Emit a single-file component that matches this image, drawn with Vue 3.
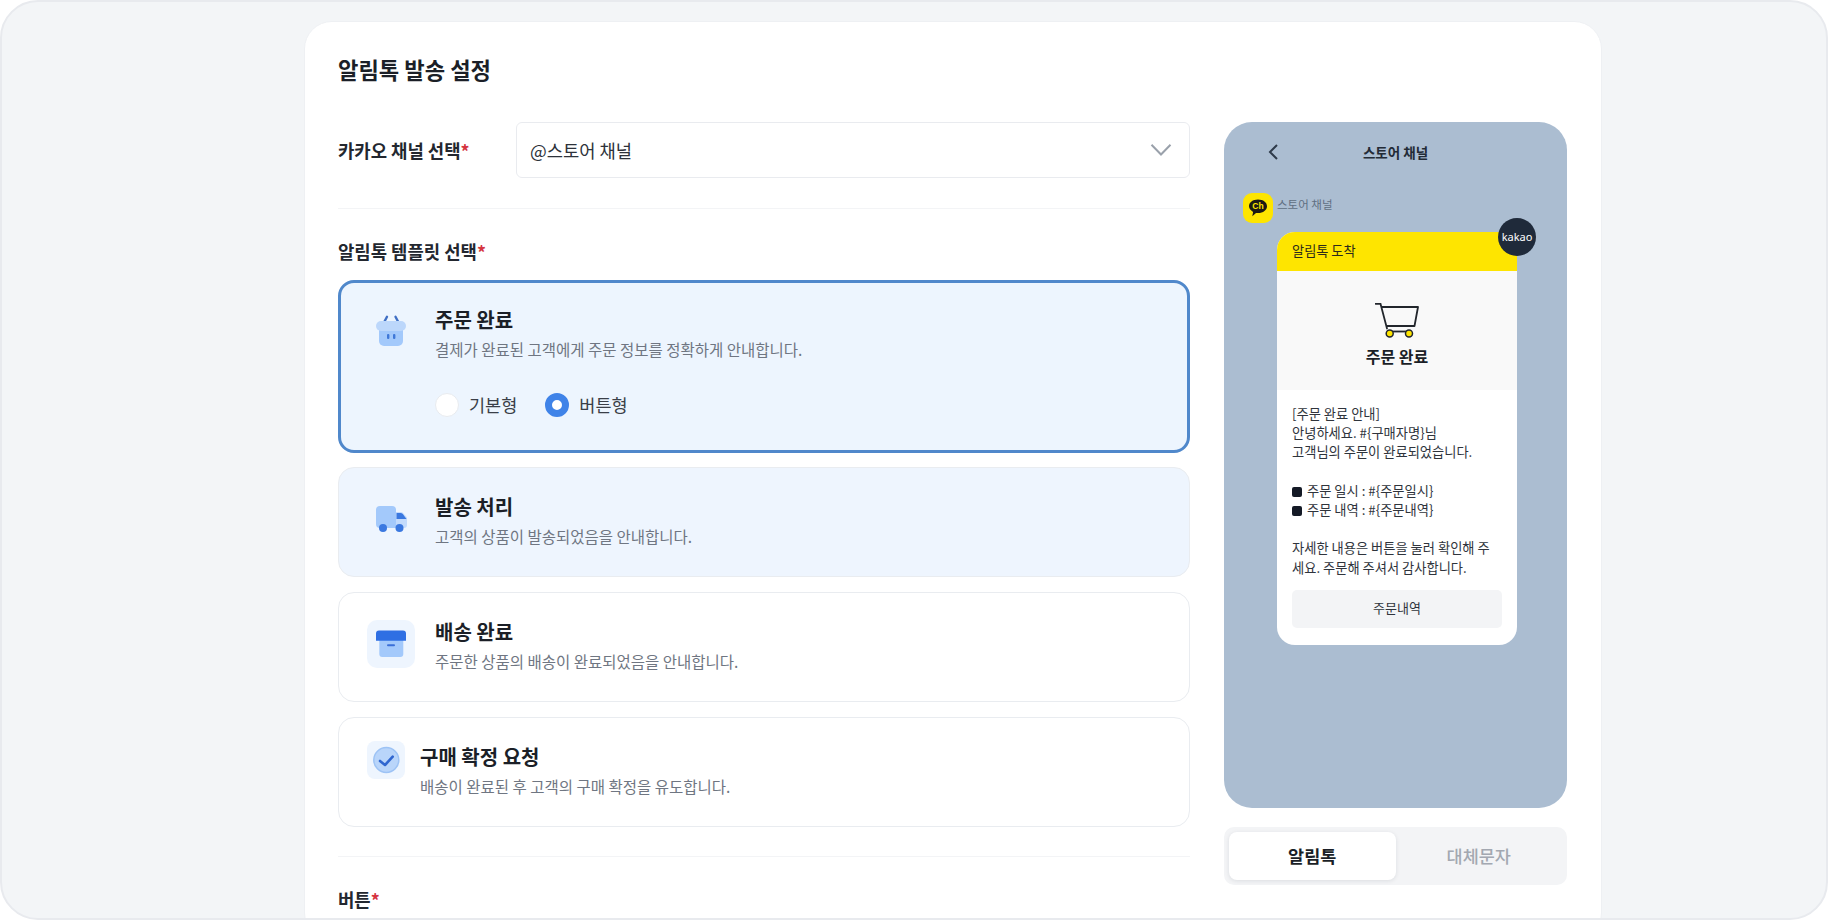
<script setup>
const bodyLines = [
  '[주문 완료 안내]',
  '안녕하세요. #{구매자명}님',
  '고객님의 주문이 완료되었습니다.',
  '',
  { bullet: '주문 일시 : #{주문일시}' },
  { bullet: '주문 내역 : #{주문내역}' },
  '',
  '자세한 내용은 버튼을 눌러 확인해 주',
  '세요. 주문해 주셔서 감사합니다.'
]
</script>

<template>
  <div class="frame">
    <main class="card">
      <h1 class="page-title">알림톡 발송 설정</h1>
      <div class="columns">
        <section class="form">
          <div class="select-row">
            <label class="label">카카오 채널 선택<em>*</em></label>
            <div class="select">
              <span>@스토어 채널</span>
              <svg width="22" height="14" viewBox="0 0 22 14" fill="none"><path d="M1.5 1.8 11 11.5l9.500-9.700" stroke="#9aa1ab" stroke-width="2"/></svg>
            </div>
          </div>
          <hr class="rule first" />
          <div class="label block">알림톡 템플릿 선택<em>*</em></div>

          <div class="tpl-list">
            <div class="tpl active">
              <div class="tpl-main">
                <div class="ico">
                  <svg width="30" height="31" viewBox="0 0 30 31" fill="none">
                    <path d="M8.500 6.500 11 1.800M22 6.500 19.500 1.800" stroke="#3f6fc4" stroke-width="2.400" stroke-linecap="round"/>
                    <path d="M3 12h24v14a5 5 0 0 1-5 5H8a5 5 0 0 1-5-5z" fill="#a3c9fb"/>
                    <rect x="0" y="6" width="30" height="10" rx="5" fill="#bcd7fb"/>
                    <rect x="11" y="19" width="2.400" height="5" rx="1" fill="#3f78d8"/>
                    <rect x="17" y="19" width="2.400" height="5" rx="1" fill="#3f78d8"/>
                  </svg>
                </div>
                <div class="tpl-text">
                  <div class="tpl-title">주문 완료</div>
                  <div class="tpl-desc">결제가 완료된 고객에게 주문 정보를 정확하게 안내합니다.</div>
                  <div class="radios">
                    <div class="radio"><span class="dot"></span>기본형</div>
                    <div class="radio on"><span class="dot"></span>버튼형</div>
                  </div>
                </div>
              </div>
            </div>

            <div class="tpl tinted">
              <div class="tpl-main">
                <div class="ico truck">
                  <svg width="31" height="27" viewBox="0 0 31 27" fill="none">
                    <path d="M18 6h6.500a4 4 0 0 1 3 1.400L31 11.500V19a3 3 0 0 1-3 3H18z" fill="#c3dbfc"/>
                    <path d="M4 0h12a4 4 0 0 1 4 4v18H4a4 4 0 0 1-4-4V4a4 4 0 0 1 4-4z" fill="#a3c9fb"/>
                    <path d="M20.500 7h4a3 3 0 0 1 2.300 1.100L30.500 13H20.500z" fill="#3a78e0"/>
                    <circle cx="7" cy="22" r="4" fill="#3a78e0"/>
                    <circle cx="23.500" cy="22" r="4" fill="#3a78e0"/>
                  </svg>
                </div>
                <div class="tpl-text">
                  <div class="tpl-title">발송 처리</div>
                  <div class="tpl-desc">고객의 상품이 발송되었음을 안내합니다.</div>
                </div>
              </div>
            </div>

            <div class="tpl">
              <div class="tpl-main">
                <div class="ico boxed archive">
                  <svg width="48" height="48" viewBox="0 0 48 48" fill="none">
                    <path d="M12.300 20h24v14a3 3 0 0 1-3 3h-18a3 3 0 0 1-3-3z" fill="#a3c9fb"/>
                    <path d="M12 10.500h24a3 3 0 0 1 3 3v7.200H9v-7.200a3 3 0 0 1 3-3z" fill="#2f6fe3"/>
                    <rect x="20" y="24.300" width="8" height="2" rx="1" fill="#3a6fd8"/>
                  </svg>
                </div>
                <div class="tpl-text">
                  <div class="tpl-title">배송 완료</div>
                  <div class="tpl-desc">주문한 상품의 배송이 완료되었음을 안내합니다.</div>
                </div>
              </div>
            </div>

            <div class="tpl">
              <div class="tpl-main small">
                <div class="ico boxed small">
                  <svg width="38" height="38" viewBox="0 0 38 38" fill="none">
                    <circle cx="19.300" cy="19" r="12.500" fill="#b9d5fa" stroke="#9dc3f5" stroke-width="1.500"/>
                    <path d="M13 20l5 4 7.700-8.300" stroke="#2f66d0" stroke-width="2.600" stroke-linecap="round" stroke-linejoin="round"/>
                  </svg>
                </div>
                <div class="tpl-text">
                  <div class="tpl-title">구매 확정 요청</div>
                  <div class="tpl-desc">배송이 완료된 후 고객의 구매 확정을 유도합니다.</div>
                </div>
              </div>
            </div>
          </div>

          <hr class="rule second" />
          <div class="label block last">버튼<em>*</em></div>
        </section>

        <aside class="preview">
          <div class="phone">
            <div class="phone-head">
              <svg width="12" height="18" viewBox="0 0 12 18" fill="none"><path d="M10 2 3 9l7 7" stroke="#2f3b4a" stroke-width="2"/></svg>
              <span class="phone-title">스토어 채널</span>
            </div>
            <div class="sender">
              <svg class="ch" width="30" height="30" viewBox="0 0 30 30">
                <rect width="30" height="30" rx="9" fill="#fee500"/>
                <path d="M15 6.500c5.200 0 9 2.900 9 6.800s-3.800 6.800-9 6.800c-.7 0-1.300 0-2-.2l-3.700 3.300.8-4.300C8 17.700 6 15.700 6 13.300 6 9.400 9.800 6.500 15 6.500z" fill="#1c1a14"/>
                <text x="15" y="16.300" text-anchor="middle" font-size="8.500" font-weight="700" fill="#fee500">Ch</text>
              </svg>
              <span class="sender-name">스토어 채널</span>
            </div>
            <div class="bubble">
              <div class="badge">kakao</div>
              <div class="bubble-head">알림톡 도착</div>
              <div class="bubble-hero">
                <svg width="44" height="36" viewBox="0 0 44 36" fill="none">
                  <path d="M.5.800H5.500L12 25.500" stroke="#22262c" stroke-width="1.800" stroke-linecap="round"/>
                  <path d="M6.500 4H43L39.500 23H11.500" stroke="#22262c" stroke-width="1.800" stroke-linejoin="round"/>
                  <path d="M14 28.500H35" stroke="#22262c" stroke-width="1.800"/>
                  <circle cx="14.700" cy="30.500" r="3.500" fill="#fee500" stroke="#22262c" stroke-width="1.500"/>
                  <circle cx="34" cy="30.500" r="3.500" fill="#fee500" stroke="#22262c" stroke-width="1.500"/>
                </svg>
                <div class="hero-text">주문 완료</div>
              </div>
              <div class="bubble-body">
                <div class="msg" v-for="(line, i) in bodyLines" :key="i">
                  <template v-if="line.bullet"><span class="sq"></span>{{ line.bullet }}</template>
                  <template v-else>{{ line || '\u00a0' }}</template>
                </div>
                <div class="msg-btn">주문내역</div>
              </div>
            </div>
          </div>
          <div class="seg">
            <div class="seg-item on">알림톡</div>
            <div class="seg-item">대체문자</div>
          </div>
        </aside>
      </div>
    </main>
  </div>
</template>

<style>
html, body { margin: 0; background: #fff; overflow: hidden; }
</style>

<style scoped>
.frame {
  box-sizing: border-box;
  width: 1828px;
  height: 920px;
  overflow: hidden;
  border: 2px solid #e8eaee;
  border-radius: 38px;
  background: #f3f5f7;
  padding: 19px 0 0 302px;
  font-family: "Noto Sans CJK KR", "Noto Sans", sans-serif;
  color: #1b1f27;
}
.card {
  box-sizing: border-box;
  width: 1298px;
  height: 920px;
  background: #fff;
  border: 1px solid #eef0f3;
  border-radius: 28px;
  padding: 32px 32px 0 33px;
}
.page-title {
  margin: 0 0 38px;
  font-size: 22.200px;
  line-height: 30px;
  font-weight: 700;
}
.columns { display: flex; gap: 34px; align-items: flex-start; }
.form { width: 852px; flex: none; }
.preview { width: 343px; flex: none; }
.select-row { display: flex; align-items: center; }
.label { font-size: 17.800px; line-height: 26px; font-weight: 700; width: 178px; flex: none; color: #23272f; }
.label em { font-style: normal; color: #d5343f; }
.label.block { width: auto; }
.select {
  box-sizing: border-box;
  flex: 1;
  height: 56px;
  border: 1px solid #e9ebef;
  border-radius: 6px;
  display: flex;
  align-items: center;
  justify-content: space-between;
  padding: 0 17px 0 13px;
  font-size: 17.700px;
  color: #2d323a;
}
.rule { border: 0; border-top: 1px solid #f3f4f6; margin: 0; }
.rule.first { margin: 30px 0 29px; }
.rule.second { margin: 29px 0; }
.tpl-list { margin-top: 16px; display: flex; flex-direction: column; gap: 15px; }
.tpl {
  box-sizing: border-box;
  height: 110px;
  border: 1px solid #e9ecf0;
  border-radius: 16px;
  background: #fff;
  padding: 25px 28px;
}
.tpl.active {
  height: 173px;
  margin-bottom: -1px;
  border: 3px solid #5088cb;
  background: #edf5fe;
  padding: 23px 26px;
}
.tpl.tinted { background: #eef5fe; }
.tpl-main { display: flex; gap: 20px; align-items: flex-start; }
.tpl-main.small { gap: 15px; }
.ico {
  width: 48px;
  height: 48px;
  flex: none;
  display: flex;
  align-items: center;
  justify-content: center;
  border-radius: 10px;
}
.ico.truck { margin-top: 2px; }
.ico.archive { margin-top: 2px; }
.ico.boxed { background: #eef5fe; }
.ico.small { width: 38px; height: 38px; border-radius: 8px; margin-top: -2px; }
.tpl-title { font-size: 20px; line-height: 28px; font-weight: 700; color: #1b1f27; }
.tpl-desc { margin-top: 3px; font-size: 15.500px; line-height: 24px; color: #6f7682; }
.radios { display: flex; gap: 28px; margin-top: 32px; }
.radio { display: flex; align-items: center; gap: 10px; font-size: 17.500px; line-height: 24px; color: #3a3f48; }
.dot {
  box-sizing: border-box;
  width: 24px;
  height: 24px;
  border-radius: 50%;
  background: #fff;
  border: 1px solid #e8ebef;
}
.radio.on .dot { border: 7px solid #3f83e8; }
.phone {
  box-sizing: border-box;
  height: 686px;
  background: #abbdd1;
  border-radius: 28px;
  padding-top: 17px;
}
.phone-head {
  position: relative;
  height: 26px;
  display: flex;
  align-items: center;
  justify-content: center;
}
.phone-head svg { position: absolute; left: 43px; top: 4px; }
.phone-title { font-size: 13.500px; font-weight: 700; color: #232b36; }
.sender {
  display: flex;
  gap: 4px;
  margin: 28px 0 0 19px;
  height: 30px;
}
.ch { font-family: "Liberation Sans", sans-serif; }
.sender-name { font-size: 11.500px; line-height: 22px; color: #5f6f82; }
.bubble {
  position: relative;
  width: 240px;
  margin: 9px 0 0 53px;
  background: #fff;
  border-radius: 18px;
}
.badge {
  position: absolute;
  right: -19px;
  top: -14px;
  width: 38px;
  height: 38px;
  border-radius: 50%;
  background: #1f2a3a;
  color: #fff;
  font-size: 11px;
  line-height: 38px;
  text-align: center;
  font-family: "Noto Sans", sans-serif;
}
.bubble-head {
  height: 39px;
  line-height: 38px;
  padding-left: 15px;
  background: #fee500;
  border-radius: 18px 18px 0 0;
  font-size: 13.200px;
  color: #2c2a1a;
}
.bubble-hero {
  box-sizing: border-box;
  height: 119px;
  background: #f9f9f9;
  padding-top: 32px;
  display: flex;
  flex-direction: column;
  align-items: center;
}
.hero-text { margin-top: 5px; font-size: 16px; line-height: 24px; font-weight: 700; }
.bubble-body { padding: 14px 15px 17px; }
.msg { font-size: 13.250px; line-height: 19.200px; color: #2f343c; white-space: nowrap; }
.sq {
  display: inline-block;
  width: 10px;
  height: 10px;
  margin-right: 5px;
  border-radius: 2px;
  background: #141a26;
  vertical-align: -1px;
}
.msg-btn {
  height: 38px;
  margin-top: 13px;
  background: #f3f4f6;
  border-radius: 5px;
  font-size: 13px;
  line-height: 36px;
  text-align: center;
  color: #2f343c;
}
.seg {
  box-sizing: border-box;
  height: 58px;
  margin-top: 19px;
  padding: 5px;
  background: #f3f4f6;
  border-radius: 10px;
  display: grid;
  grid-template-columns: 1fr 1fr;
}
.seg-item {
  border-radius: 8px;
  font-size: 17.500px;
  line-height: 48px;
  text-align: center;
  color: #a3a8b1;
  font-weight: 500;
}
.seg-item.on {
  background: #fff;
  color: #1b1f27;
  font-weight: 700;
  box-shadow: 0 1px 4px rgba(20, 30, 50, 0.1);
}
</style>
